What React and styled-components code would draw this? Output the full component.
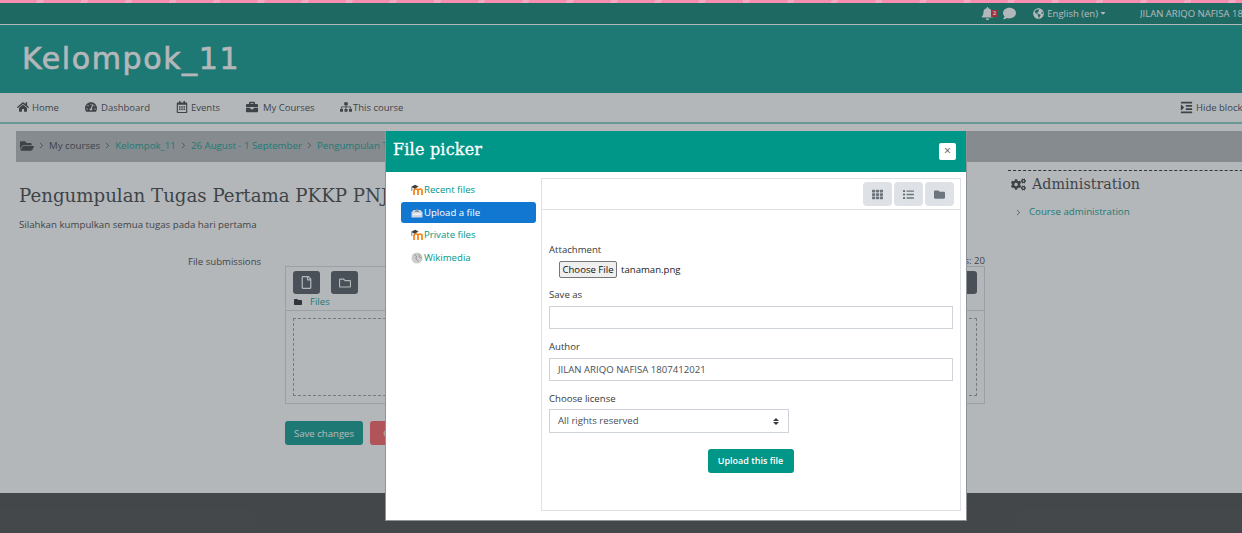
import styled, { createGlobalStyle } from "styled-components";
import {
  FaBell,
  FaBriefcase,
  FaCaretDown,
  FaCogs,
  FaComment,
  FaFolder,
  FaFolderOpen,
  FaGlobeAmericas,
  FaHome,
  FaIndent,
  FaList,
  FaRegCalendarAlt,
  FaRegFile,
  FaRegFolder,
  FaSitemap,
  FaTachometerAlt,
  FaTh,
} from "react-icons/fa";
import { FiChevronRight } from "react-icons/fi";

const GlobalStyle = createGlobalStyle`
  html, body {
    margin: 0;
    padding: 0;
    background: #fff;
    overflow: hidden;
  }
  * {
    box-sizing: border-box;
  }
`;

const navItems = [
  { icon: FaHome, label: "Home", width: 68, gap: 3 },
  { icon: FaTachometerAlt, label: "Dashboard", width: 91, gap: 4 },
  { icon: FaRegCalendarAlt, label: "Events", width: 70, gap: 3 },
  { icon: FaBriefcase, label: "My Courses", width: 94, gap: 5 },
  { icon: FaSitemap, label: "This course", width: 100, gap: 1 },
];

const crumbs = ["Kelompok_11", "26 August - 1 September", "Pengumpulan Tugas Pertama PKKP PNJ"];

function MoodleIcon() {
  return (
    <svg width="12" height="11" viewBox="0 0 12 11">
      <path d="M3 11V6.6Q3 5 5 5Q7 5 7 6.6V11M7 6.6Q7 5 9 5Q11 5 11 6.6V11" fill="none" stroke="#f98012" strokeWidth="1.7" />
      <path d="M0 3 4 .8 7.6 2.6 3.8 4.8z" fill="#3f3f3f" />
      <path d="M.8 3.4V7" stroke="#666" strokeWidth="0.8" />
    </svg>
  );
}

function UploadIcon() {
  return (
    <svg width="12" height="11" viewBox="0 0 12 11">
      <path d="M0.5 5.5 2.5 3h7l2 2.5V10.5H.5z" fill="#cfd6e2" />
      <path d="M3.5 5 6 1.5 8.5 5z" fill="#8a94a6" />
      <path d="M2 6.5h8v1.5H2z" fill="#eef1f6" />
    </svg>
  );
}

function WikiIcon() {
  return (
    <svg width="12" height="12" viewBox="0 0 12 12">
      <circle cx="6" cy="6" r="5.5" fill="#cdcdcd" />
      <path d="M3 2.5 5.5 4 5 7 7.5 9.5M8 2l.5 3 2.5 1" fill="none" stroke="#9a9a9a" strokeWidth="1" />
    </svg>
  );
}

export default function App() {
  return (
    <Page>
      <GlobalStyle />
      <PinkStripe />
      <TopBar>
        <Bell>
          <FaBell size={13} />
          <Badge>2</Badge>
        </Bell>
        <FaComment size={13} />
        <Language>
          <FaGlobeAmericas size={11} />
          English ‎(en)‎
          <LanguageCaret />
        </Language>
        <UserName>JILAN ARIQO NAFISA 1807412021</UserName>
      </TopBar>
      <Header>
        <Logo>Kelompok_11</Logo>
      </Header>
      <Nav>
        {navItems.map(({ icon: Icon, label, width, gap }) => (
          <NavItem key={label} $width={width} $gap={gap}>
            <Icon size={12} />
            {label}
          </NavItem>
        ))}
        <HideBlocks>
          <FaIndent size={13} />
          Hide blocks
        </HideBlocks>
      </Nav>
      <Breadcrumb>
        <FaFolderOpen size={14} />
        <CrumbArrow />
        <span>My courses</span>
        {crumbs.map((crumb) => (
          <CrumbLink key={crumb}>
            <CrumbArrow />
            <a>{crumb}</a>
          </CrumbLink>
        ))}
      </Breadcrumb>
      <Main>
        <Content>
          <PageTitle>Pengumpulan Tugas Pertama PKKP PNJ</PageTitle>
          <Intro>Silahkan kumpulkan semua tugas pada hari pertama</Intro>
          <SubmissionRow>
            <FieldLabel>File submissions</FieldLabel>
            <FieldColumn>
              <MaxFiles>Maximum number of files: 20</MaxFiles>
              <Manager>
                <ManagerBar>
                  <ManagerButtons>
                    <DarkButton><FaRegFile size={13} /></DarkButton>
                    <DarkButton><FaRegFolder size={12} /></DarkButton>
                    <DarkButton $right />
                  </ManagerButtons>
                  <FilesPath>
                    <FaFolder size={8} />
                    <a>Files</a>
                  </FilesPath>
                </ManagerBar>
                <DropArea>
                  <DropBorder />
                </DropArea>
              </Manager>
              <Actions>
                <SaveButton>Save changes</SaveButton>
                <CancelButton>Cancel</CancelButton>
              </Actions>
            </FieldColumn>
          </SubmissionRow>
        </Content>
        <SideBlock>
          <BlockTitle>
            <FaCogs size={15} />
            Administration
          </BlockTitle>
          <BlockLink>
            <FiChevronRight size={9} />
            <a>Course administration</a>
          </BlockLink>
        </SideBlock>
      </Main>
      <Footer />
      <Backdrop />
      <Dialog>
        <DialogHeader>
          <DialogTitle>File picker</DialogTitle>
          <CloseButton>×</CloseButton>
        </DialogHeader>
        <DialogBody>
          <Sidebar>
            <SideItem><MoodleIcon /><span>Recent files</span></SideItem>
            <SideItem $active><UploadIcon /><span>Upload a file</span></SideItem>
            <SideItem><MoodleIcon /><span>Private files</span></SideItem>
            <SideItem><WikiIcon /><span>Wikimedia</span></SideItem>
          </Sidebar>
          <Pane>
            <PaneToolbar>
              <ViewButton><FaTh size={11} /></ViewButton>
              <ViewButton><FaList size={11} /></ViewButton>
              <ViewButton><FaFolder size={11} /></ViewButton>
            </PaneToolbar>
            <UploadForm>
              <FormLabel>Attachment</FormLabel>
              <FileRow>
                <ChooseFile>Choose File</ChooseFile>
                <span>tanaman.png</span>
              </FileRow>
              <FormLabel>Save as</FormLabel>
              <TextInput />
              <FormLabel>Author</FormLabel>
              <TextInput>JILAN ARIQO NAFISA 1807412021</TextInput>
              <FormLabel>Choose license</FormLabel>
              <LicenseSelect>
                All rights reserved
                <SelectCarets>
                  <i />
                  <b />
                </SelectCarets>
              </LicenseSelect>
              <UploadButton>Upload this file</UploadButton>
            </UploadForm>
          </Pane>
        </DialogBody>
      </Dialog>
    </Page>
  );
}

const Page = styled.div`
  position: relative;
  display: flex;
  flex-direction: column;
  width: 1242px;
  height: 533px;
  overflow: hidden;
  background: #fff;
  font-family: "Open Sans", "Liberation Sans", sans-serif;
  font-size: 9.6px;
  color: #373a3c;

  a {
    color: #009688;
  }
`;

const PinkStripe = styled.div`
  height: 3px;
  background: repeating-linear-gradient(115deg, #f78fb0 0 34px, #f7a8c2 34px 40px);
`;

const TopBar = styled.div`
  display: flex;
  align-items: center;
  justify-content: flex-end;
  flex: none;
  height: 22px;
  padding-bottom: 1px;
  background: #007c6c;
  border-bottom: 1px solid #fff;
  color: #fff;
  font-size: 9.5px;
  white-space: nowrap;
  overflow: hidden;
`;

const Bell = styled.span`
  position: relative;
  display: inline-flex;
  width: 22px;
`;

const Badge = styled.span`
  position: absolute;
  left: 10px;
  top: 3px;
  width: 6px;
  height: 7px;
  background: #e01b24;
  color: #fff;
  font-size: 6px;
  font-weight: 700;
  line-height: 7px;
  text-align: center;
`;

const Language = styled.span`
  display: inline-flex;
  align-items: center;
  gap: 3px;
  margin-left: 17px;
`;

const LanguageCaret = styled(FaCaretDown).attrs({ size: 8 })`
  margin-left: -2px;
`;

const UserName = styled.span`
  flex: none;
  width: 102px;
  margin-left: 33px;
  overflow: hidden;
`;

const Header = styled.header`
  flex: none;
  height: 68px;
  padding: 14px 0 0 22px;
  background: #009688;
`;

const Logo = styled.div`
  font-family: "DejaVu Sans", sans-serif;
  font-size: 30px;
  line-height: 40px;
  letter-spacing: 1.6px;
  -webkit-text-stroke: 0.6px #fff;
  color: #fff;
`;

const Nav = styled.nav`
  display: flex;
  align-items: center;
  flex: none;
  height: 31px;
  padding: 0 0 1px 17px;
  background: #fff;
  border-bottom: 2px solid #80cbc4;
  font-size: 9.5px;
  white-space: nowrap;
`;

const NavItem = styled.span`
  display: inline-flex;
  align-items: center;
  gap: ${(props) => props.$gap}px;
  width: ${(props) => props.$width}px;
`;

const HideBlocks = styled.span`
  display: inline-flex;
  align-items: center;
  gap: 3px;
  position: absolute;
  left: 1180px;
`;

const Breadcrumb = styled.div`
  display: flex;
  align-items: center;
  flex: none;
  gap: 3px;
  height: 31px;
  margin: 7px 0 0 16px;
  padding: 0 0 2px 4px;
  background: #b0b4b7;
  font-size: 9.7px;
  white-space: nowrap;
  overflow: hidden;
`;

const CrumbArrow = styled(FiChevronRight).attrs({ size: 9 })`
  flex: none;
`;

const CrumbLink = styled.span`
  display: inline-flex;
  align-items: center;
  gap: 3px;
`;

const Main = styled.main`
  display: flex;
  flex: 1;
  min-height: 0;
  padding: 8px 0 0 19px;
  background: #fff;
`;

const Content = styled.div`
  width: 966px;
  flex: none;
`;

const PageTitle = styled.h2`
  margin: 14px 0 0;
  font-family: "DejaVu Serif", serif;
  font-size: 18.2px;
  font-weight: 400;
  line-height: 24px;
  white-space: nowrap;
`;

const Intro = styled.p`
  margin: 10px 0 0;
  font-size: 9.7px;
  line-height: 14px;
`;

const SubmissionRow = styled.div`
  display: flex;
  margin-top: 23px;
`;

const FieldLabel = styled.div`
  width: 266px;
  padding-left: 169px;
  line-height: 14px;
  white-space: nowrap;
`;

const FieldColumn = styled.div`
  width: 700px;
`;

const MaxFiles = styled.div`
  height: 11px;
  line-height: 11px;
  text-align: right;
`;

const Manager = styled.div`
  height: 138px;
  border: 1px solid #d6d8da;
  display: flex;
  flex-direction: column;
`;

const ManagerBar = styled.div`
  height: 44px;
  padding: 4px 7px 0;
  border-bottom: 1px solid #d6d8da;
`;

const ManagerButtons = styled.div`
  display: flex;
  gap: 11px;
`;

const DarkButton = styled.span`
  display: flex;
  align-items: center;
  justify-content: center;
  width: 27px;
  height: 23px;
  margin-left: ${(props) => (props.$right ? "auto" : "0")};
  border-radius: 3px;
  background: #495057;
  color: #fff;
`;

const FilesPath = styled.div`
  display: flex;
  align-items: center;
  gap: 8px;
  margin: 2px 0 0 1px;
  line-height: 12px;
  color: #212529;
`;

const DropArea = styled.div`
  flex: 1;
  padding: 7px;
`;

const DropBorder = styled.div`
  height: 78px;
  border: 1px dashed #9a9a9a;
`;

const Actions = styled.div`
  display: flex;
  gap: 7px;
  margin-top: 17px;
`;

const SaveButton = styled.span`
  width: 78px;
  height: 24px;
  border-radius: 3px;
  background: #009688;
  color: #fff;
  line-height: 25px;
  text-align: center;
`;

const CancelButton = styled(SaveButton)`
  width: 56px;
  background: #f8585a;
`;

const SideBlock = styled.aside`
  flex: none;
  width: 260px;
  margin-left: 23px;
  height: 60px;
  padding-top: 3px;
  border-top: 1px dashed #212529;
`;

const BlockTitle = styled.div`
  display: flex;
  align-items: center;
  gap: 6px;
  padding-left: 3px;
  font-family: "DejaVu Serif", serif;
  font-size: 14.3px;
  line-height: 20px;
`;

const BlockLink = styled.div`
  display: flex;
  align-items: center;
  gap: 6px;
  margin: 11px 0 0 6px;
  font-size: 9.7px;
  line-height: 14px;
`;

const Footer = styled.footer`
  flex: none;
  height: 40px;
  background: #424242;
`;

const Backdrop = styled.div`
  position: absolute;
  inset: 0;
  top: 3px;
  background: rgba(73, 80, 87, 0.41);
`;

const Dialog = styled.section`
  position: absolute;
  left: 385px;
  top: 131px;
  width: 582px;
  height: 390px;
  display: flex;
  flex-direction: column;
  background: #fff;
  border: 1px solid #8f9396;
  border-top: 0;
`;

const DialogHeader = styled.div`
  display: flex;
  align-items: center;
  justify-content: space-between;
  flex: none;
  height: 41px;
  padding: 0 10px 0 7px;
  background: #009688;
`;

const DialogTitle = styled.h3`
  margin: 0 0 4px;
  font-family: "DejaVu Serif", serif;
  font-size: 16px;
  font-weight: 400;
  color: #fff;
  letter-spacing: 0.2px;
  -webkit-text-stroke: 0.3px #fff;
`;

const CloseButton = styled.span`
  width: 17px;
  height: 17px;
  border-radius: 2px;
  background: #fff;
  color: #555;
  font-size: 12px;
  line-height: 16px;
  text-align: center;
`;

const DialogBody = styled.div`
  display: flex;
  flex: 1;
  min-height: 0;
  padding: 6px 5px 9px 15px;
  gap: 5px;
`;

const Sidebar = styled.div`
  flex: none;
  width: 135px;
  padding-top: 1px;
`;

const SideItem = styled.div`
  display: flex;
  align-items: center;
  gap: 1px;
  height: 21px;
  margin-bottom: 1.7px;
  padding-left: 10px;
  border-radius: 3px;
  background: ${(props) => (props.$active ? "#1177d1" : "transparent")};
  color: ${(props) => (props.$active ? "#fff" : "#009688")};
`;

const Pane = styled.div`
  flex: 1;
  min-width: 0;
  border: 1px solid #dee2e6;
`;

const PaneToolbar = styled.div`
  display: flex;
  justify-content: flex-end;
  gap: 2px;
  height: 31px;
  padding: 3px 6px 0 0;
  border-bottom: 1px solid #dee2e6;
`;

const ViewButton = styled.span`
  display: flex;
  align-items: center;
  justify-content: center;
  width: 29px;
  height: 24px;
  border-radius: 4px;
  background: #dee2e6;
  color: #6c757d;
`;

const UploadForm = styled.div`
  display: flex;
  flex-direction: column;
  align-items: flex-start;
  padding: 33px 7px 0;
`;

const FormLabel = styled.div`
  line-height: 14px;
`;

const FileRow = styled.div`
  display: flex;
  align-items: center;
  gap: 4px;
  height: 19px;
  margin: 3px 0 9px 10px;
  color: #222;
`;

const ChooseFile = styled.span`
  width: 58px;
  height: 17px;
  border: 1px solid #767676;
  border-radius: 2px;
  background: #efefef;
  color: #111;
  line-height: 15px;
  text-align: center;
`;

const TextInput = styled.div`
  width: 404px;
  height: 23px;
  margin: 4px 0 11px;
  padding-left: 8px;
  border: 1px solid #ced4da;
  line-height: 21px;
  color: #495057;
`;

const LicenseSelect = styled(TextInput)`
  position: relative;
  width: 240px;
  height: 24px;
  margin: 3px 0 0;
  line-height: 22px;
`;

const SelectCarets = styled.span`
  position: absolute;
  right: 9px;
  top: 8px;
  display: flex;
  flex-direction: column;
  gap: 1px;

  i,
  b {
    display: block;
    border-left: 3px solid transparent;
    border-right: 3px solid transparent;
  }
  i {
    border-bottom: 3px solid #343a40;
  }
  b {
    border-top: 3px solid #343a40;
  }
`;

const UploadButton = styled.span`
  align-self: center;
  width: 86px;
  height: 24px;
  margin: 16px 0 0 -1px;
  border-radius: 3px;
  background: #009688;
  color: #fff;
  font-size: 9px;
  font-weight: 600;
  line-height: 24px;
  text-align: center;
`;
